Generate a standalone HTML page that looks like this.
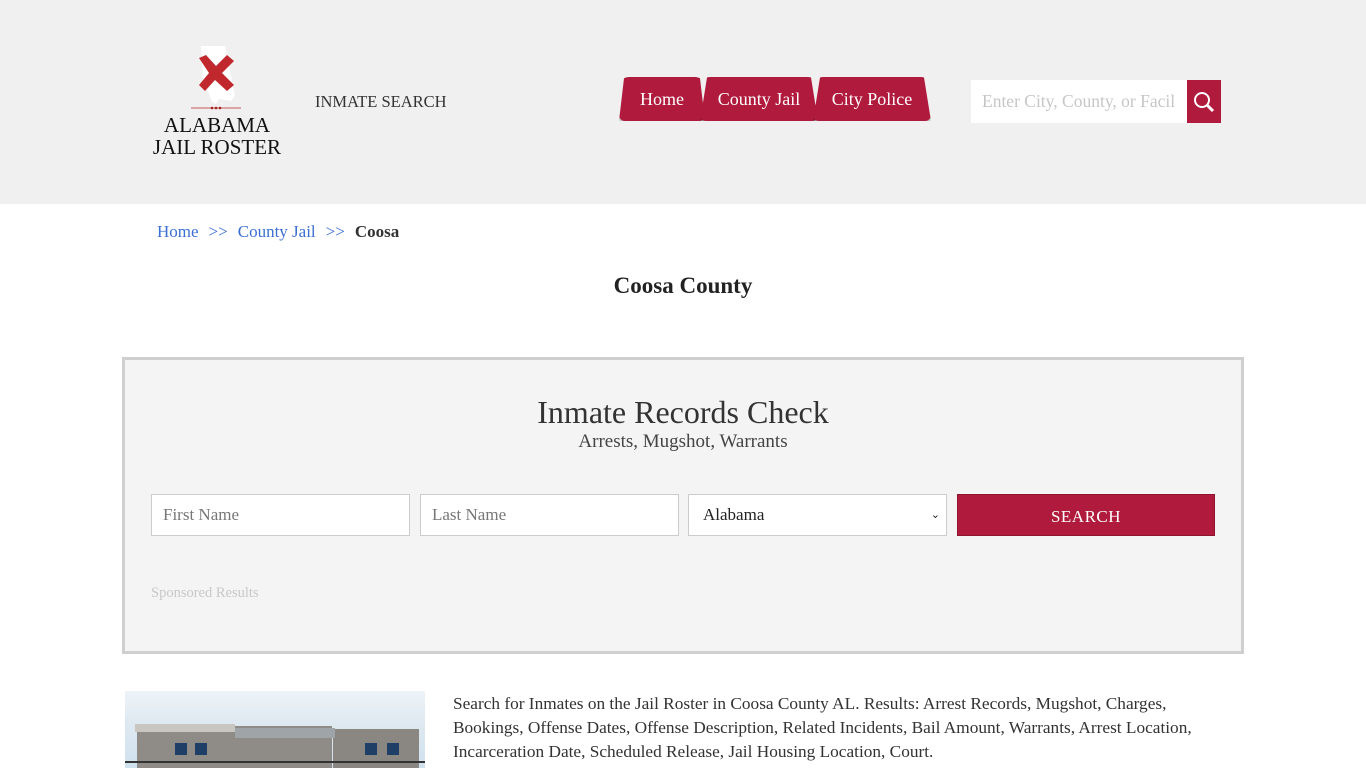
<!DOCTYPE html>
<html><head><meta charset="utf-8"><style>
*{box-sizing:border-box;margin:0;padding:0}
body{width:1366px;height:768px;overflow:hidden;background:#fff;font-family:"Liberation Serif",serif;color:#333}
.hdr{position:absolute;top:0;left:0;width:1366px;height:204px;background:#f0f0f0}
.logo{position:absolute;left:188px;top:44px}
.lt{position:absolute;left:145px;top:114px;width:144px;text-align:center;font-size:21px;line-height:22px;color:#111;white-space:nowrap}
.isr{position:absolute;left:315px;top:92px;font-size:16.5px;color:#333}
.nav{position:absolute;top:77px;height:44px;background:#b01a3c;color:#fff;font-size:18px;line-height:44px;text-align:center;border-radius:10px 10px 6px 6px;clip-path:polygon(6% 0,94% 0,100% 100%,0 100%);box-shadow:0 2px 3px rgba(0,0,0,.3)}
.srch{position:absolute;left:971px;top:80px;width:216px;height:43px;background:#fff;color:#c6c6c6;font-size:17.5px;line-height:43px;padding-left:11px;white-space:nowrap;overflow:hidden}
.sbtn{position:absolute;left:1187px;top:80px;width:34px;height:43px;background:#b01a3c}
.bc{position:absolute;left:157px;top:222px;font-size:17px;color:#333;white-space:nowrap}
.bc a{color:#3b6fd4;text-decoration:none}
.bc span{color:#3b6fd4;margin:0 10px}
h1{position:absolute;top:273px;width:1366px;text-align:center;font-size:23px;font-weight:bold;color:#222}
.box{position:absolute;left:122px;top:357px;width:1122px;height:297px;border:3px solid #cfcfcf;background:#f4f4f4}
.h2{position:absolute;top:394px;width:1366px;text-align:center;font-size:32px;color:#333}
.sub{position:absolute;top:431px;width:1366px;text-align:center;font-size:19px;color:#444}
.inp{position:absolute;top:494px;width:259px;height:42px;border:1px solid #ccc;background:#fff;font-size:17px;color:#777;line-height:40px;padding-left:11px}
.btn{position:absolute;left:957px;top:494px;width:258px;height:42px;background:#b01a3c;border:1px solid #8d1530;color:#fff;font-size:17px;line-height:44px;text-align:center;letter-spacing:.5px}
.sp{position:absolute;left:151px;top:585px;font-size:14.5px;color:#c8c8c8}
.img{position:absolute;left:125px;top:691px;width:300px;height:77px;background:linear-gradient(#eef4f8,#dfe9f1 40%,#cfe1ee);overflow:hidden}
.txt{position:absolute;left:453px;top:692px;width:760px;font-size:17.3px;line-height:24px;color:#333}
</style></head><body>
<div class="hdr"></div>
<svg class="logo" width="62" height="70" viewBox="0 0 60 70">
<path d="M12 2 L36 2 L46 52 L42 57 L30 55 L27 60 L23 58 L18 44 L14 38 Z" fill="#fff"/>
<path d="M10 14 L17 11 L27 22 L38 11 L45 17 L33 29 L45 41 L38 47 L26 36 L16 47 L10 41 L20 29 Z" fill="#c0282e"/>
<line x1="2" y1="64" x2="52" y2="64" stroke="#c77" stroke-width="1.2"/>
<circle cx="23" cy="64" r="1.3" fill="#a22"/><circle cx="27" cy="64" r="1.3" fill="#a22"/><circle cx="31" cy="64" r="1.3" fill="#a22"/>
</svg>
<div class="lt">ALABAMA<br>JAIL ROSTER</div>
<div class="isr">INMATE SEARCH</div>
<div class="nav" style="left:619px;width:86px">Home</div>
<div class="nav" style="left:700px;width:118px">County Jail</div>
<div class="nav" style="left:813px;width:118px">City Police</div>
<div class="srch">Enter City, County, or Facil</div>
<div class="sbtn"><svg width="34" height="43" viewBox="0 0 34 43"><circle cx="15" cy="20" r="7" fill="none" stroke="#fff" stroke-width="2"/><line x1="20" y1="25" x2="26" y2="31" stroke="#fff" stroke-width="3"/></svg></div>
<div class="bc"><a>Home</a><span>&gt;&gt;</span><a>County Jail</a><span>&gt;&gt;</span><b style="color:#333">Coosa</b></div>
<h1>Coosa County</h1>
<div class="box"></div>
<div class="h2">Inmate Records Check</div>
<div class="sub">Arrests, Mugshot, Warrants</div>
<div class="inp" style="left:151px">First Name</div>
<div class="inp" style="left:420px">Last Name</div>
<div class="inp" style="left:688px;color:#222;padding-left:14px">Alabama<span style="position:absolute;right:6px;font-size:11px">&#8964;</span></div>
<div class="btn">SEARCH</div>
<div class="sp">Sponsored Results</div>
<div class="img">
<div style="position:absolute;left:12px;top:35px;width:195px;height:50px;background:#8f8c88"></div>
<div style="position:absolute;left:10px;top:33px;width:100px;height:8px;background:#c9c6c2"></div>
<div style="position:absolute;left:208px;top:38px;width:86px;height:45px;background:#8a8782"></div>
<div style="position:absolute;left:110px;top:37px;width:100px;height:10px;background:#9fa4a8"></div>
<div style="position:absolute;left:50px;top:52px;width:12px;height:12px;background:#1f3f66"></div>
<div style="position:absolute;left:70px;top:52px;width:12px;height:12px;background:#1f3f66"></div>
<div style="position:absolute;left:240px;top:52px;width:12px;height:12px;background:#1f3f66"></div>
<div style="position:absolute;left:262px;top:52px;width:12px;height:12px;background:#1f3f66"></div>
<div style="position:absolute;left:0;top:70px;width:300px;height:2px;background:#333"></div>
</div>
<div class="txt">Search for Inmates on the Jail Roster in Coosa County AL. Results: Arrest Records, Mugshot, Charges, Bookings, Offense Dates, Offense Description, Related Incidents, Bail Amount, Warrants, Arrest Location, Incarceration Date, Scheduled Release, Jail Housing Location, Court.</div>
</body></html>
